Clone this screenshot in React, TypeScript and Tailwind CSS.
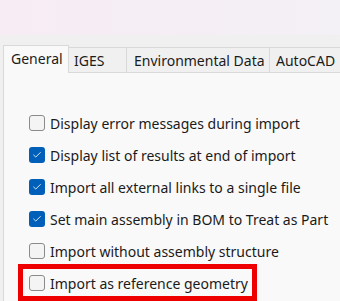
import { Check } from "lucide-react";

const rows = [
  { label: "Display error messages during import", checked: false },
  { label: "Display list of results at end of import", checked: true },
  { label: "Import all external links to a single file", checked: true },
  { label: "Set main assembly in BOM to Treat as Part", checked: true },
  { label: "Import without assembly structure", checked: false },
  { label: "Import as reference geometry", checked: false },
];

function Box({ checked }: { checked: boolean }) {
  if (checked) {
    return (
      <span className="flex h-4 w-4 shrink-0 items-center justify-center rounded-[3px] bg-[#005fb8]">
        <Check className="h-[10px] w-[10px] text-white" strokeWidth={2} />
      </span>
    );
  }
  return (
    <span className="h-4 w-4 shrink-0 rounded-[3px] border border-[#8b8b8b] bg-[#f4f4f4]" />
  );
}

export default function App() {
  return (
    <div
      className="relative flex h-[301px] w-[340px] flex-col overflow-hidden bg-[#f0f0f0] text-[#1b1b1b]"
      style={{ fontFamily: '"Noto Sans", sans-serif' }}
    >
      <div className="h-[35px] shrink-0 bg-gradient-to-r from-[#f7ecf3] to-[#f3f0f6]" />

      {/* tabs */}
      <div className="flex h-[37px] shrink-0 items-end whitespace-nowrap pl-[3px] text-[14px]">
        <div className="relative z-10 -mb-px flex h-[28px] w-[66px] items-start border border-b-0 border-[#d9d9d9] bg-[#f9f9f9] pl-[7px] pt-[2px]">
          General
        </div>
        <div className="flex h-[25px] w-[58px] items-center border-r border-t border-[#d9d9d9] pl-[5px]">
          IGES
        </div>
        <div className="flex h-[25px] w-[143px] items-center border-r border-t border-[#d9d9d9] pl-[7px]">
          Environmental Data
        </div>
        <div className="flex h-[25px] flex-1 items-center border-t border-[#d9d9d9] pl-[6px]">
          AutoCAD
        </div>
      </div>

      {/* panel */}
      <div className="ml-[3px] flex flex-1 flex-col border-l border-t border-[#d9d9d9] bg-[#f9f9f9] pl-[25px] pt-[34px]">
        {rows.map((r) => (
          <div key={r.label} className="flex h-[32px] items-center gap-[5px] whitespace-nowrap text-[14px]">
            <Box checked={r.checked} />
            <span>{r.label}</span>
          </div>
        ))}
      </div>

      {/* red annotation */}
      <div className="pointer-events-none absolute left-[18px] top-[264px] h-[37px] w-[239px] border-[5px] border-[#ee0000]" />
    </div>
  );
}
